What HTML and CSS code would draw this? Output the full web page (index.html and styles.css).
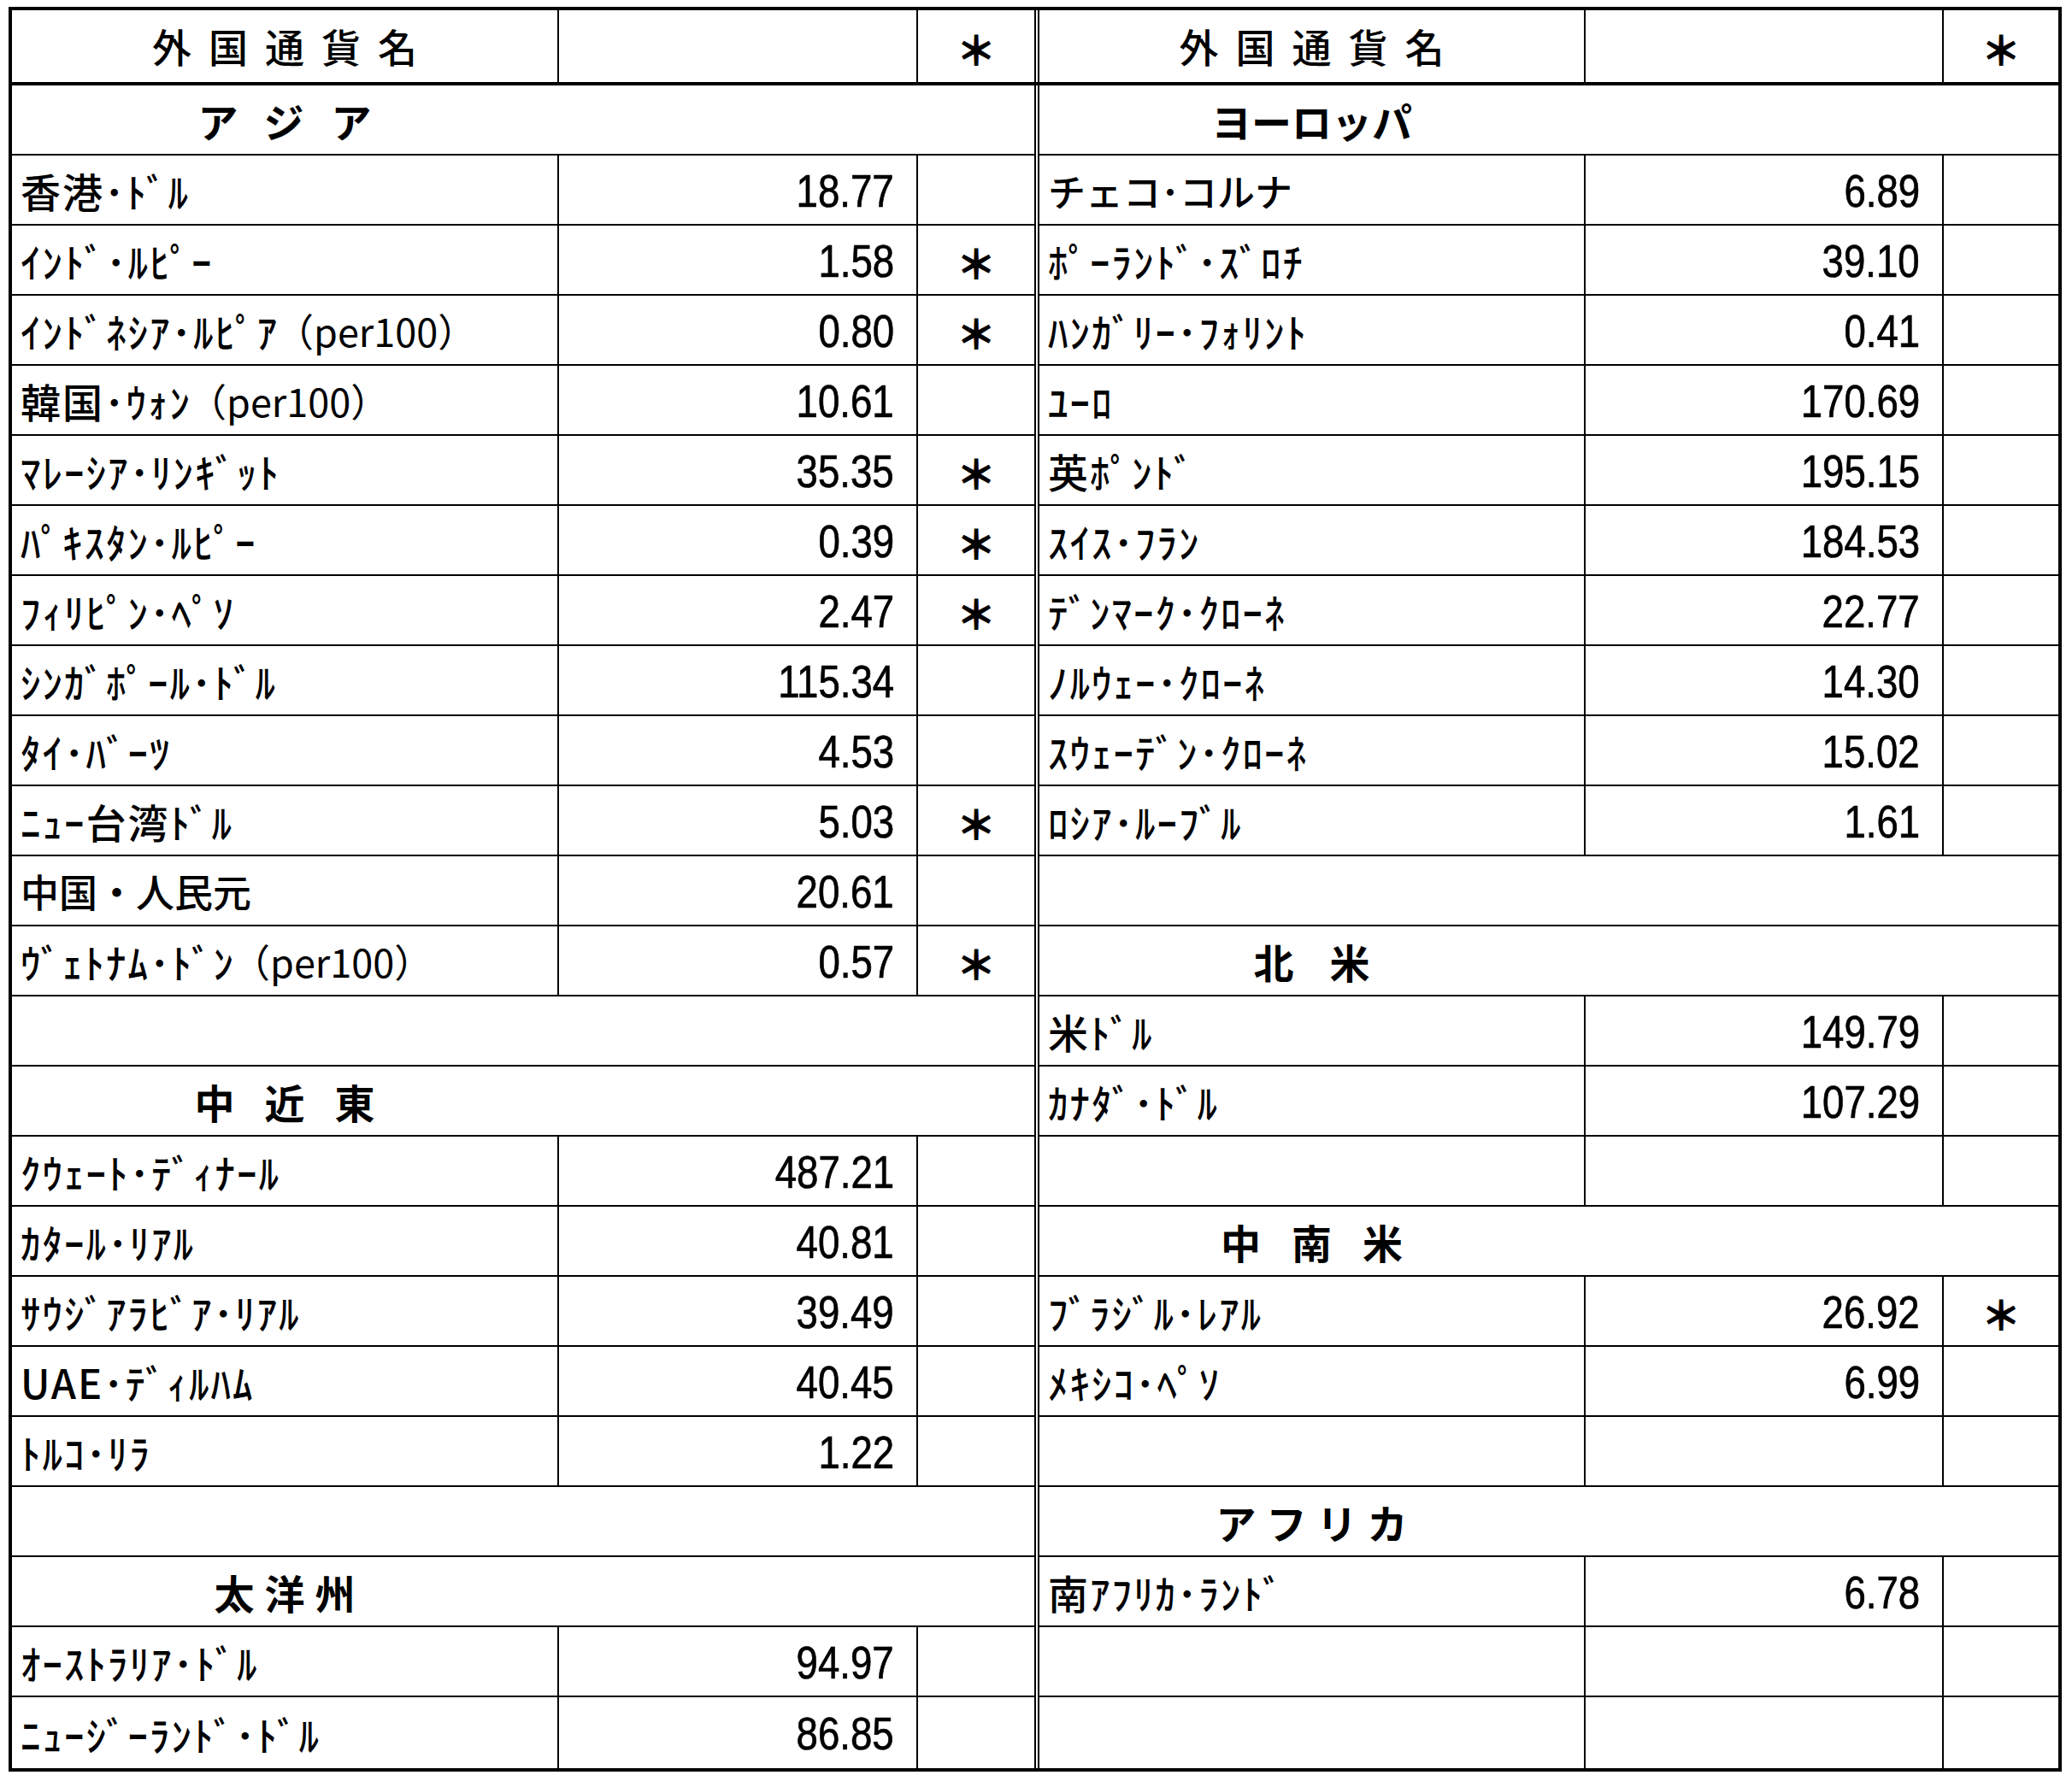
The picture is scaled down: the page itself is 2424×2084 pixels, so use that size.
FILE: index.html
```html
<!DOCTYPE html>
<html lang="ja">
<head>
<meta charset="utf-8">
<title>外国通貨</title>
<link rel="stylesheet" href="styles.css">
</head>
<body>
<div class="sheet">
  <!-- header -->
  <div class="c hd name-h">外国通貨名</div>
  <div class="c hd"></div>
  <div class="c hd star">＊</div>
  <div class="mid-h"></div>
  <div class="c hd name-h">外国通貨名</div>
  <div class="c hd"></div>
  <div class="c hd star edge">＊</div>
  <div class="mid"></div>

  <!-- row 1 -->
  <div class="c span sec sp-asia">アジア</div>
  <div class="c span sec edge sp-eu">ヨーロッパ</div>

  <!-- row 2 -->
  <div class="c name">香港･ﾄﾞﾙ</div><div class="c val"><span class="num">18.77</span></div><div class="c star"></div>
  <div class="c name fw">チェコ･コルナ</div><div class="c val"><span class="num">6.89</span></div><div class="c star edge"></div>

  <!-- row 3 -->
  <div class="c name">ｲﾝﾄﾞ･ﾙﾋﾟｰ</div><div class="c val"><span class="num">1.58</span></div><div class="c star">＊</div>
  <div class="c name">ﾎﾟｰﾗﾝﾄﾞ･ｽﾞﾛﾁ</div><div class="c val"><span class="num">39.10</span></div><div class="c star edge"></div>

  <!-- row 4 -->
  <div class="c name">ｲﾝﾄﾞﾈｼｱ･ﾙﾋﾟｱ<span class="per">（per100）</span></div><div class="c val"><span class="num">0.80</span></div><div class="c star">＊</div>
  <div class="c name">ﾊﾝｶﾞﾘｰ･ﾌｫﾘﾝﾄ</div><div class="c val"><span class="num">0.41</span></div><div class="c star edge"></div>

  <!-- row 5 -->
  <div class="c name">韓国･ｳｫﾝ<span class="per">（per100）</span></div><div class="c val"><span class="num">10.61</span></div><div class="c star"></div>
  <div class="c name">ﾕｰﾛ</div><div class="c val"><span class="num">170.69</span></div><div class="c star edge"></div>

  <!-- row 6 -->
  <div class="c name">ﾏﾚｰｼｱ･ﾘﾝｷﾞｯﾄ</div><div class="c val"><span class="num">35.35</span></div><div class="c star">＊</div>
  <div class="c name">英ﾎﾟﾝﾄﾞ</div><div class="c val"><span class="num">195.15</span></div><div class="c star edge"></div>

  <!-- row 7 -->
  <div class="c name">ﾊﾟｷｽﾀﾝ･ﾙﾋﾟｰ</div><div class="c val"><span class="num">0.39</span></div><div class="c star">＊</div>
  <div class="c name">ｽｲｽ･ﾌﾗﾝ</div><div class="c val"><span class="num">184.53</span></div><div class="c star edge"></div>

  <!-- row 8 -->
  <div class="c name">ﾌｨﾘﾋﾟﾝ･ﾍﾟｿ</div><div class="c val"><span class="num">2.47</span></div><div class="c star">＊</div>
  <div class="c name">ﾃﾞﾝﾏｰｸ･ｸﾛｰﾈ</div><div class="c val"><span class="num">22.77</span></div><div class="c star edge"></div>

  <!-- row 9 -->
  <div class="c name">ｼﾝｶﾞﾎﾟｰﾙ･ﾄﾞﾙ</div><div class="c val"><span class="num">115.34</span></div><div class="c star"></div>
  <div class="c name">ﾉﾙｳｪｰ･ｸﾛｰﾈ</div><div class="c val"><span class="num">14.30</span></div><div class="c star edge"></div>

  <!-- row 10 -->
  <div class="c name">ﾀｲ･ﾊﾞｰﾂ</div><div class="c val"><span class="num">4.53</span></div><div class="c star"></div>
  <div class="c name">ｽｳｪｰﾃﾞﾝ･ｸﾛｰﾈ</div><div class="c val"><span class="num">15.02</span></div><div class="c star edge"></div>

  <!-- row 11 -->
  <div class="c name">ﾆｭｰ台湾ﾄﾞﾙ</div><div class="c val"><span class="num">5.03</span></div><div class="c star">＊</div>
  <div class="c name">ﾛｼｱ･ﾙｰﾌﾞﾙ</div><div class="c val"><span class="num">1.61</span></div><div class="c star edge"></div>

  <!-- row 12 -->
  <div class="c name cn">中国・人民元</div><div class="c val"><span class="num">20.61</span></div><div class="c star"></div>
  <div class="c span edge"></div>

  <!-- row 13 -->
  <div class="c name">ｳﾞｪﾄﾅﾑ･ﾄﾞﾝ<span class="per">（per100）</span></div><div class="c val"><span class="num">0.57</span></div><div class="c star">＊</div>
  <div class="c span sec edge sp-na">北米</div>

  <!-- row 14 -->
  <div class="c span"></div>
  <div class="c name">米ﾄﾞﾙ</div><div class="c val"><span class="num">149.79</span></div><div class="c star edge"></div>

  <!-- row 15 -->
  <div class="c span sec sp-me">中近東</div>
  <div class="c name">ｶﾅﾀﾞ･ﾄﾞﾙ</div><div class="c val"><span class="num">107.29</span></div><div class="c star edge"></div>

  <!-- row 16 -->
  <div class="c name">ｸｳｪｰﾄ･ﾃﾞｨﾅｰﾙ</div><div class="c val"><span class="num">487.21</span></div><div class="c star"></div>
  <div class="c name"></div><div class="c val"></div><div class="c star edge"></div>

  <!-- row 17 -->
  <div class="c name">ｶﾀｰﾙ･ﾘｱﾙ</div><div class="c val"><span class="num">40.81</span></div><div class="c star"></div>
  <div class="c span sec edge sp-sa">中南米</div>

  <!-- row 18 -->
  <div class="c name">ｻｳｼﾞｱﾗﾋﾞｱ･ﾘｱﾙ</div><div class="c val"><span class="num">39.49</span></div><div class="c star"></div>
  <div class="c name">ﾌﾞﾗｼﾞﾙ･ﾚｱﾙ</div><div class="c val"><span class="num">26.92</span></div><div class="c star edge">＊</div>

  <!-- row 19 -->
  <div class="c name">UAE･ﾃﾞｨﾙﾊﾑ</div><div class="c val"><span class="num">40.45</span></div><div class="c star"></div>
  <div class="c name">ﾒｷｼｺ･ﾍﾟｿ</div><div class="c val"><span class="num">6.99</span></div><div class="c star edge"></div>

  <!-- row 20 -->
  <div class="c name">ﾄﾙｺ･ﾘﾗ</div><div class="c val"><span class="num">1.22</span></div><div class="c star"></div>
  <div class="c name"></div><div class="c val"></div><div class="c star edge"></div>

  <!-- row 21 -->
  <div class="c span"></div>
  <div class="c span sec edge sp-af">アフリカ</div>

  <!-- row 22 -->
  <div class="c span sec sp-oc">太洋州</div>
  <div class="c name">南ｱﾌﾘｶ･ﾗﾝﾄﾞ</div><div class="c val"><span class="num">6.78</span></div><div class="c star edge"></div>

  <!-- row 23 -->
  <div class="c name">ｵｰｽﾄﾗﾘｱ･ﾄﾞﾙ</div><div class="c val"><span class="num">94.97</span></div><div class="c star"></div>
  <div class="c name"></div><div class="c val"></div><div class="c star edge"></div>

  <!-- row 24 -->
  <div class="c name last">ﾆｭｰｼﾞｰﾗﾝﾄﾞ･ﾄﾞﾙ</div><div class="c val last"><span class="num">86.85</span></div><div class="c star last"></div>
  <div class="c name last"></div><div class="c val last"></div><div class="c star edge last"></div>
</div>
</body>
</html>
```
FILE: styles.css
```css
html, body {
  margin: 0;
  padding: 0;
  background: #fff;
}

body {
  padding: 8px 0 0 10px;
  font-family: "Noto Sans CJK JP", "Noto Sans", sans-serif;
  color: #000;
}

.sheet {
  display: grid;
  grid-template-columns: 640px 420px 138px 4px 639px 419px 134px;
  grid-template-rows: 88px repeat(23, 82px) 83px;
  width: max-content;
  border: 4px solid #000;
}

.c {
  box-sizing: border-box;
  border-right: 2px solid #000;
  border-bottom: 2px solid #000;
  display: flex;
  align-items: center;
  min-width: 0;
  overflow: hidden;
  white-space: nowrap;
}

.c.edge {
  border-right: 0;
}

.c.last {
  border-bottom: 0;
}

.hd {
  border-bottom: 4px solid #000;
  font-size: 46px;
  font-weight: 500;
}

.name-h {
  justify-content: center;
  letter-spacing: 20px;
  padding-left: 20px;
  padding-bottom: 2px;
}

.mid-h {
  box-sizing: border-box;
  border-right: 2px solid #000;
  border-bottom: 4px solid #000;
}

.mid {
  grid-column: 4;
  grid-row: 2 / -1;
  box-sizing: border-box;
  border-right: 2px solid #000;
}

.span {
  grid-column: span 3;
}

.sec {
  font-size: 47px;
  font-weight: 700;
  padding-right: 558px;
  justify-content: center;
}

.sec.edge {
  padding-right: 555px;
}

.sp-asia { letter-spacing: 32px; padding-left: 32px; }
.sp-eu { letter-spacing: 0; }
.sp-me { letter-spacing: 35px; padding-left: 35px; }
.sp-oc { letter-spacing: 12px; padding-left: 12px; }
.sp-na { letter-spacing: 42px; padding-left: 42px; }
.sp-sa { letter-spacing: 36px; padding-left: 36px; }
.sp-af { letter-spacing: 12px; padding-left: 12px; }

.name {
  font-size: 47px;
  font-weight: 500;
  letter-spacing: 2px;
  padding-left: 10px;
  padding-top: 1px;
}

.name.cn {
  letter-spacing: 0;
  font-size: 45px;
}

.name.fw {
  letter-spacing: 0;
  font-size: 44px;
}

.per {
  letter-spacing: 0;
  font-weight: 400;
  font-size: 45px;
  margin-left: -4px;
}

.val {
  justify-content: flex-end;
  padding-right: 26px;
  padding-top: 2px;
}

.num {
  display: inline-block;
  font-family: "Liberation Sans", Arial, sans-serif;
  font-size: 53px;
  -webkit-text-stroke: 0.7px #000;
  transform: scaleX(0.86);
  transform-origin: right center;
}

.star {
  justify-content: center;
  font-size: 46px;
  font-weight: 700;
  -webkit-text-stroke: 1px #000;
  padding-top: 4px;
}
```
